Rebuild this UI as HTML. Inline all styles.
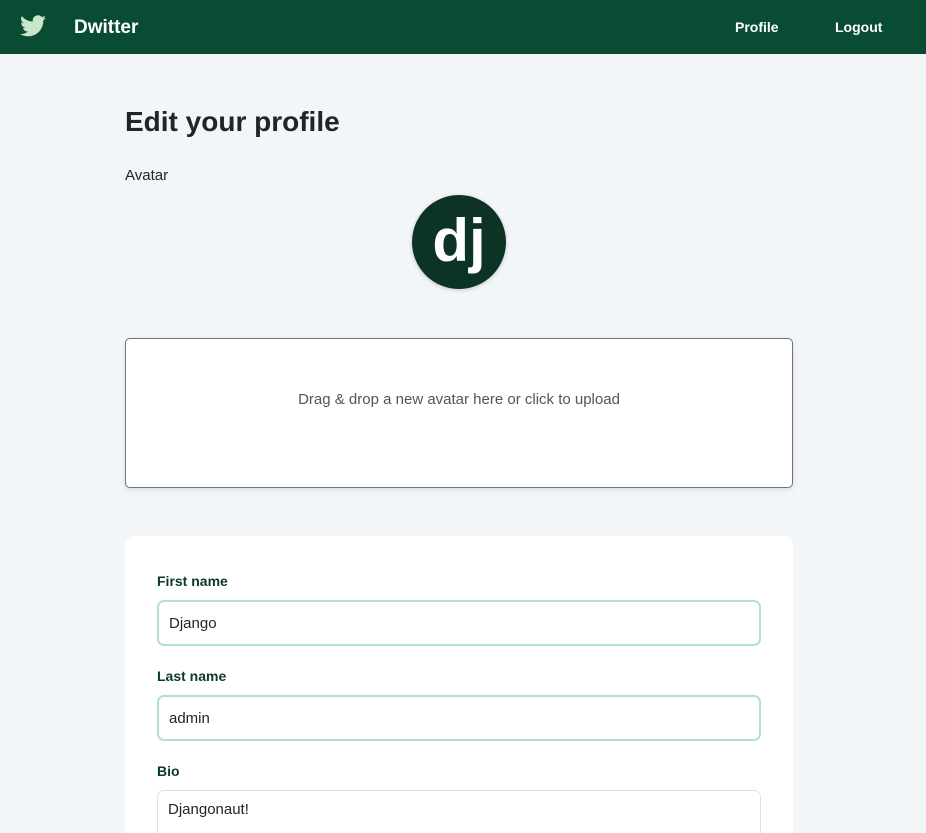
<!DOCTYPE html>
<html><head><meta charset="utf-8"><style>
html,body{margin:0;overflow:hidden}
body{background:#f3f6f9;font-family:"Liberation Sans",sans-serif;width:926px;height:833px;position:relative;color:#212529}
.nav{position:absolute;left:0;top:0;width:926px;height:54px;background:#0a4b33}
.brand{position:absolute;left:74px;top:17px;color:#fff;font-weight:bold;font-size:19px}
.nl{position:absolute;top:19px;color:#fff;font-weight:bold;font-size:14px}
h1{position:absolute;left:125px;top:106px;margin:0;font-size:28px;font-weight:bold}
.av{position:absolute;left:125px;top:167px;font-size:15px}
.circ{position:absolute;left:412px;top:195px;width:94px;height:94px;border-radius:50%;background:#0c3323;box-shadow:0 1px 4px rgba(0,0,0,.2);color:#fff;font-size:60px;font-weight:bold;text-align:center;line-height:92px;letter-spacing:0px}
.drop{position:absolute;left:125px;top:338px;width:666px;height:148px;border:1px solid #6c757d;border-radius:5px;background:#fff;box-shadow:0 2px 6px rgba(0,0,0,.1);text-align:center;line-height:122px;color:#555;font-size:15px}
.card{position:absolute;left:125px;top:536px;width:668px;height:320px;background:#fff;border-radius:10px}
.lbl{position:absolute;left:32px;font-weight:bold;font-size:14px;color:#0c3b25}
.in{position:absolute;left:32px;width:604px;height:46px;border:2px solid #b2dfdb;border-radius:7px;box-sizing:border-box;padding:0 10px;line-height:44px;font-size:15px;background:#fff}
</style></head><body>
<div class="nav">
<svg style="position:absolute;left:20px;top:15px" width="26" height="22" viewBox="0 0 24 20"><path fill="#c8e6c9" d="M24 2.4a9.8 9.8 0 0 1-2.8.8A4.9 4.9 0 0 0 23.3.5a9.9 9.9 0 0 1-3.1 1.2A4.9 4.9 0 0 0 11.8 6 14 14 0 0 1 1.7.9a4.9 4.9 0 0 0 1.5 6.6A4.9 4.9 0 0 1 1 6.9a4.9 4.9 0 0 0 3.9 4.8 4.9 4.9 0 0 1-2.2.1 4.9 4.9 0 0 0 4.6 3.4A9.9 9.9 0 0 1 0 17.3 14 14 0 0 0 7.5 19.5c9 0 14-7.5 14-14v-.6A10 10 0 0 0 24 2.4z"/></svg>
<div class="brand">Dwitter</div>
<div class="nl" style="left:735px">Profile</div>
<div class="nl" style="left:835px">Logout</div>
</div>
<h1>Edit your profile</h1>
<div class="av">Avatar</div>
<div class="circ">dj</div>
<div class="drop">Drag &amp; drop a new avatar here or click to upload</div>
<div class="card">
<div class="lbl" style="top:37px">First name</div>
<div class="in" style="top:64px">Django</div>
<div class="lbl" style="top:132px">Last name</div>
<div class="in" style="top:159px">admin</div>
<div class="lbl" style="top:227px">Bio</div>
<div class="in" style="top:254px;height:80px;border:1px solid #dee2e6;line-height:38px">Djangonaut!</div>
</div>
</body></html>
